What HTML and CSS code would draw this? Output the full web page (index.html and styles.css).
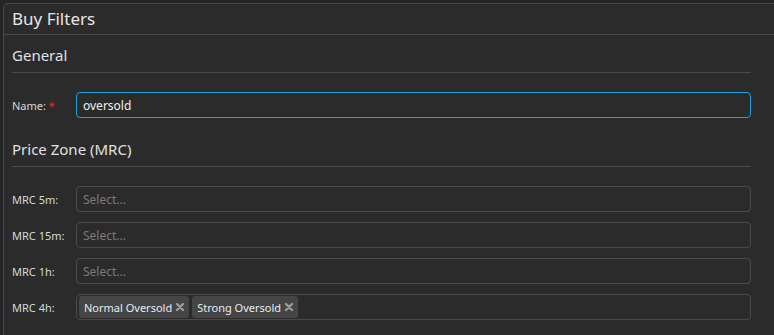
FILE: index.html
```html
<!DOCTYPE html>
<html>
<head>
<meta charset="utf-8">
<link rel="stylesheet" href="styles.css">
</head>
<body>
<div class="panel">
  <div class="panel-header">Buy Filters</div>
  <div class="panel-body">
    <div class="section">
      <div class="section-title">General</div>
      <div class="row">
        <label class="label">Name: <span class="req">*</span></label>
        <div class="input focused">oversold</div>
      </div>
    </div>
    <div class="section">
      <div class="section-title">Price Zone (MRC)</div>
      <div class="row">
        <label class="label">MRC 5m:</label>
        <div class="input placeholder">Select...</div>
      </div>
      <div class="row">
        <label class="label">MRC 15m:</label>
        <div class="input placeholder">Select...</div>
      </div>
      <div class="row">
        <label class="label">MRC 1h:</label>
        <div class="input placeholder">Select...</div>
      </div>
      <div class="row">
        <label class="label">MRC 4h:</label>
        <div class="input tags">
          <span class="tag">Normal Oversold<svg class="x" viewBox="0 0 10 10" width="10" height="10"><path d="M2 2 L8 8 M8 2 L2 8" stroke="#9c9c9c" stroke-width="2.4" stroke-linecap="round"/></svg></span>
          <span class="tag">Strong Oversold<svg class="x" viewBox="0 0 10 10" width="10" height="10"><path d="M2 2 L8 8 M8 2 L2 8" stroke="#9c9c9c" stroke-width="2.4" stroke-linecap="round"/></svg></span>
        </div>
      </div>
    </div>
  </div>
</div>
</body>
</html>
```
FILE: styles.css
```css
html, body {
  margin: 0;
  padding: 0;
  height: 100%;
  background: #252525;
  overflow: hidden;
  font-family: "Noto Sans", "Open Sans", sans-serif;
  color: #dcdcdc;
}
.panel {
  box-sizing: border-box;
  margin: 3px 0 0 3px;
  width: 800px;
  height: calc(100% - 3px);
  background: #2b2b2b;
  border: 1px solid #474747;
  border-bottom: 0;
  border-radius: 5px 5px 0 0;
}
.panel-header {
  height: 30px;
  line-height: 29px;
  padding-left: 8px;
  font-size: 17px;
  color: #e6e6e6;
  border-bottom: 1px solid #474747;
}
.panel-body {
  width: 739px;
  padding-left: 8px;
}
.section-title {
  font-size: 15px;
  color: #e0e0e0;
  height: 37px;
  line-height: 40px;
  border-bottom: 1px solid #4a4a4a;
  margin-bottom: 19px;
}
.section + .section .section-title {
  margin-top: 11px;
}
.row {
  display: flex;
  align-items: center;
  height: 26px;
  margin-bottom: 10px;
}
.label {
  width: 64px;
  flex: none;
  font-size: 11px;
  color: #d8d8d8;
}
.req {
  color: #e03030;
}
.input {
  flex: 1;
  box-sizing: border-box;
  height: 26px;
  border: 1px solid #4a4a4a;
  border-radius: 4px;
  padding: 0 6px;
  display: flex;
  align-items: center;
  font-size: 12px;
}
.input.focused {
  border-color: #1ba1e2;
  color: #f0f0f0;
}
.input.placeholder {
  color: #7a7a7a;
}
.input.tags {
  padding: 0 2px;
  gap: 3px;
}
.tag {
  display: flex;
  align-items: center;
  gap: 3px;
  background: #454545;
  border-radius: 3px;
  height: 22px;
  padding: 0 4px 0 5px;
  color: #e4ecf4;
  font-size: 11px;
}
.x {
  flex: none;
}
```
